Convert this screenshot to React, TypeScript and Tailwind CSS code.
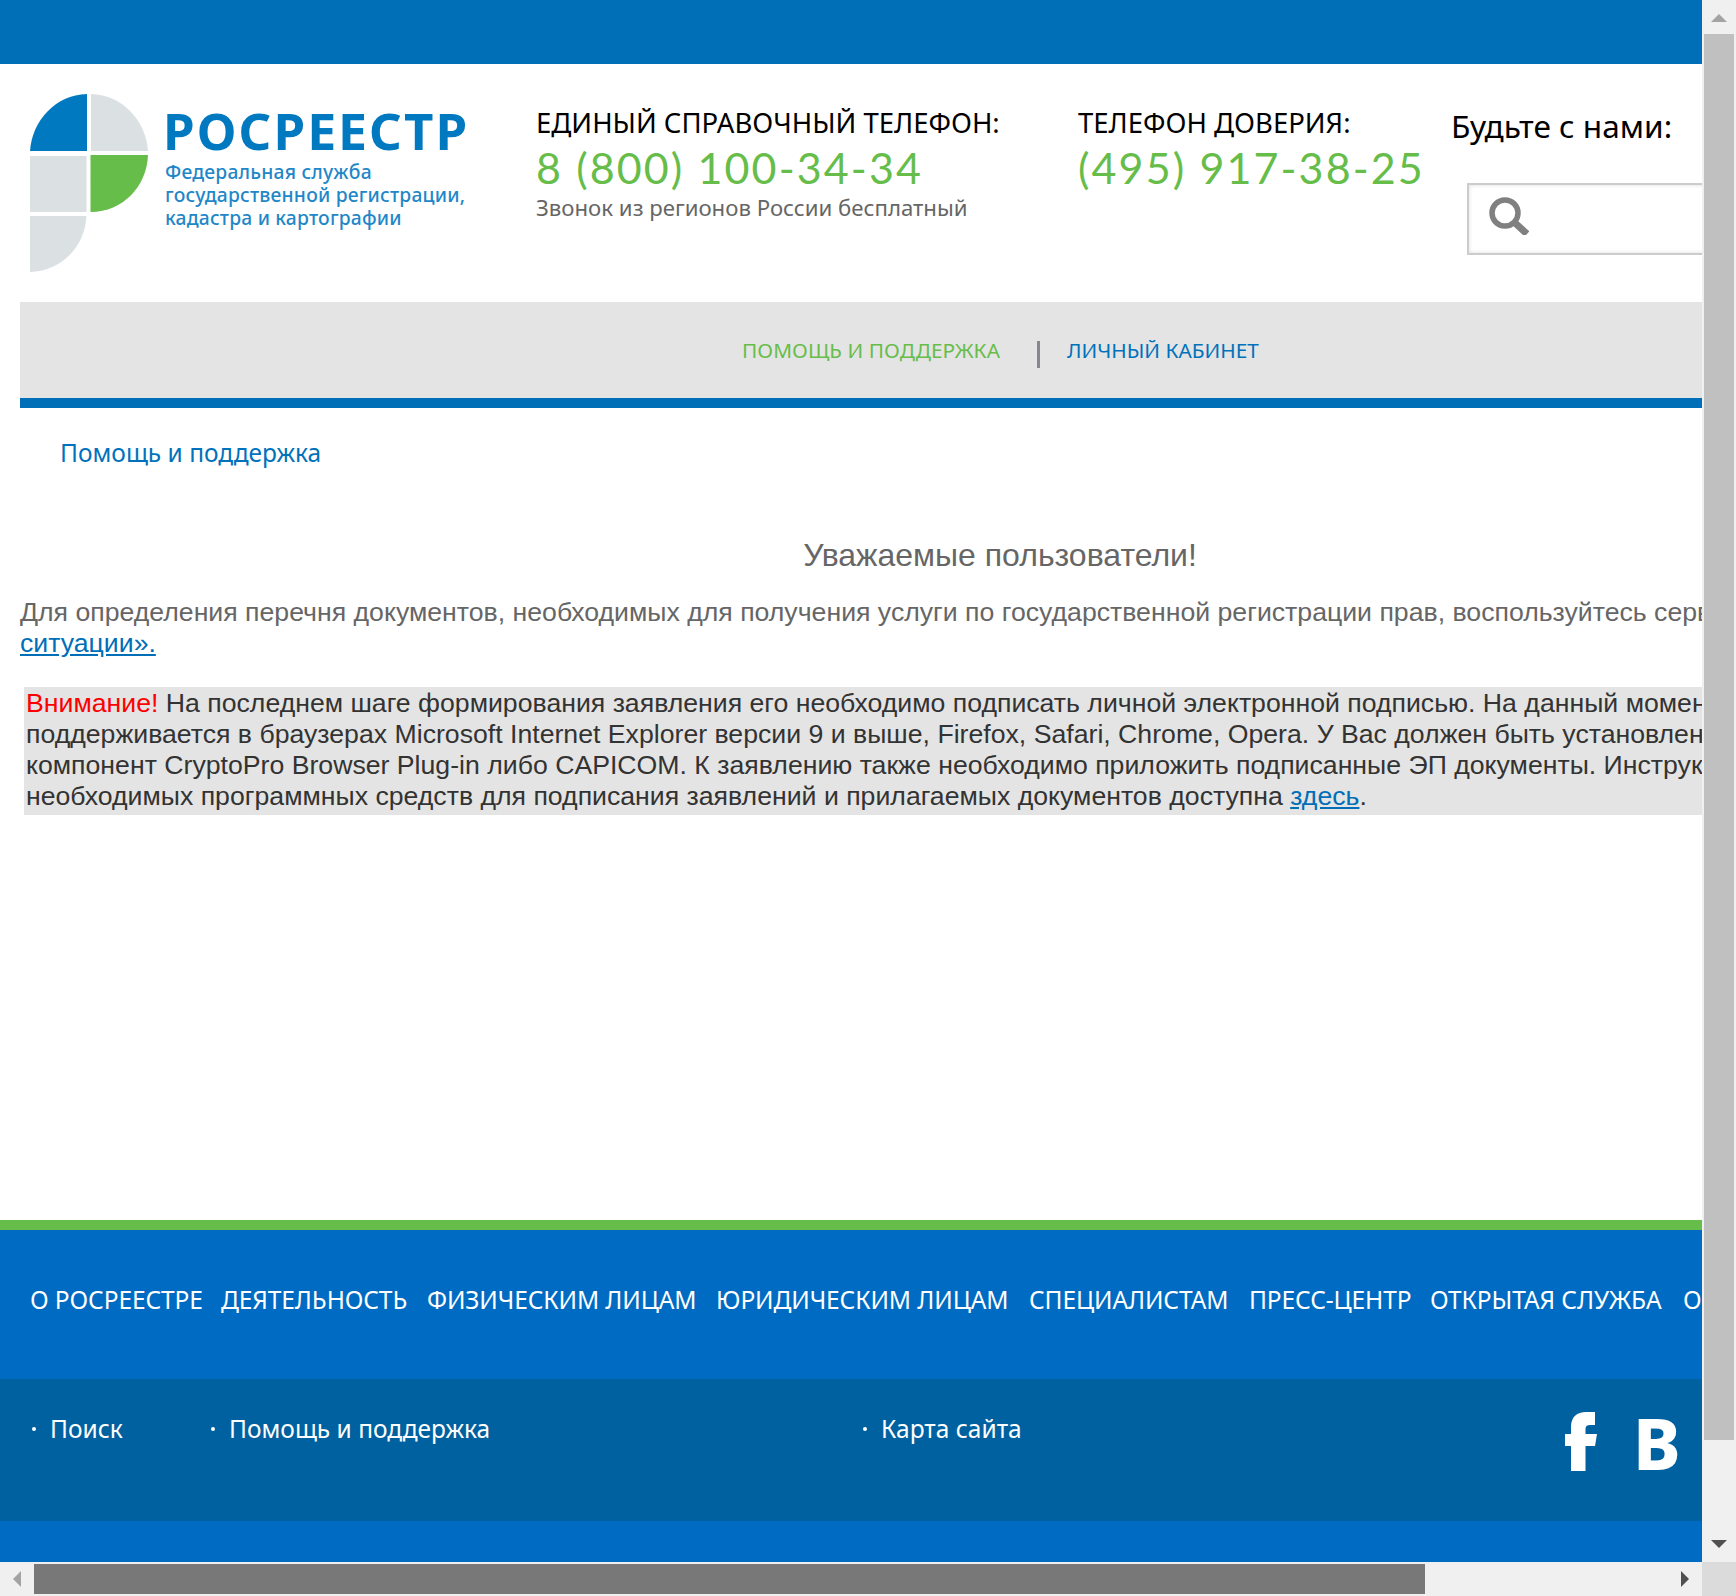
const footerSections = [
  { label: "О РОСРЕЕСТРЕ", box: "w-[191px]" },
  { label: "ДЕЯТЕЛЬНОСТЬ", box: "w-[206px]" },
  { label: "ФИЗИЧЕСКИМ ЛИЦАМ", box: "w-[289px]" },
  { label: "ЮРИДИЧЕСКИМ ЛИЦАМ", box: "w-[313px]" },
  { label: "СПЕЦИАЛИСТАМ", box: "w-[220px]" },
  { label: "ПРЕСС-ЦЕНТР", box: "w-[181px]" },
  { label: "ОТКРЫТАЯ СЛУЖБА", box: "w-[253px]" },
  { label: "О", box: "w-[200px]" },
];

const footerLinks = [
  { label: "Поиск", box: "w-[179px]" },
  { label: "Помощь и поддержка", box: "w-[652px]" },
  { label: "Карта сайта", box: "w-[702px]" },
];

function Logo() {
  return (
    <div className="flex h-[178px] w-[437px] shrink-0 overflow-hidden">
      <svg width="118" height="178" viewBox="0 0 118 178" className="shrink-0">
        <path d="M57 0V57H0C2 27 25 1 57 0Z" fill="#0079c1" />
        <path d="M61 0V57H118C116 27 93 1 61 0Z" fill="#dbe0e3" />
        <path d="M0 62H56.500V118H0Z" fill="#dbe0e3" />
        <path d="M60.500 61H118C117 92 93 118 60.500 118Z" fill="#67bd4a" />
        <path d="M0 122H56.500C55 152 32 177 0 178Z" fill="#dbe0e3" />
      </svg>
      <div className="ml-[15px] whitespace-nowrap">
        <div className="mt-[7px] h-[58px] text-[51px] leading-[58px] font-bold tracking-[2.100px] text-[#0079c1]">
          РОСРЕЕСТР
        </div>
        <div className="mt-[1px] pl-0.5 text-[19.300px] leading-[23px] font-medium tracking-[0.200px] text-[#1f87c8]">
          <p>Федеральная служба</p>
          <p>государственной регистрации,</p>
          <p>кадастра и картографии</p>
        </div>
      </div>
    </div>
  );
}

function Header() {
  return (
    <header className="flex h-[238px] pl-[30px] whitespace-nowrap">
      <div className="pt-[30px]">
        <Logo />
      </div>
      <div className="ml-[69px] w-[542px] shrink-0 pt-[39px]">
        <p className="text-[27.500px] leading-[40px] text-black">ЕДИНЫЙ СПРАВОЧНЫЙ ТЕЛЕФОН:</p>
        <p className="font-[Lato] text-[43px] leading-[50px] tracking-[2.100px] text-[#67bd4a]">8 (800) 100-34-34</p>
        <p className="-mt-px text-[22.200px] leading-[32px] text-[#666]">Звонок из регионов России бесплатный</p>
      </div>
      <div className="w-[373px] shrink-0 pt-[39px]">
        <p className="text-[27.500px] leading-[40px] text-black">ТЕЛЕФОН ДОВЕРИЯ:</p>
        <p className="font-[Lato] text-[43px] leading-[50px] tracking-[2.100px] text-[#67bd4a]">(495) 917-38-25</p>
      </div>
      <div className="shrink-0 pt-[42px]">
        <p className="text-[31.600px] leading-[40px] text-black">Будьте с нами:</p>
        <div className="mt-[37px] ml-4 h-[72px] w-[500px] border-2 border-[#ccc] pt-[12px] pl-5 shadow-[inset_0_0_4px_#ddd]">
          <svg width="40" height="38" viewBox="0 0 40 38" fill="none" stroke="#808080">
            <circle cx="16" cy="16" r="13" strokeWidth="5.500" />
            <path d="M25 25L38 37" strokeWidth="7" />
          </svg>
        </div>
      </div>
    </header>
  );
}

function Main() {
  return (
    <main className="h-[918px] w-[1980px] pl-5">
      <nav className="flex h-[106px] items-center border-b-[10px] border-[#006fb8] bg-[#e4e4e4] pl-[722px] text-[20.800px] whitespace-nowrap">
        <a className="mt-0.5 w-[295px] tracking-[0.050px] text-[#67bd4a]">ПОМОЩЬ И ПОДДЕРЖКА</a>
        <span className="mt-[9px] mr-[27px] h-[27px] w-[3px] bg-[#87878f]" />
        <a className="mt-0.5 text-[#0072bc]">ЛИЧНЫЙ КАБИНЕТ</a>
      </nav>
      <p className="mt-[25px] pl-[40px] text-[24.500px] leading-[40px] text-[#0072bc]">Помощь и поддержка</p>
      <div className="font-['Liberation_Sans'] text-[26.670px] leading-[31px] whitespace-nowrap">
        <h1 className="mt-[64px] text-center text-[32px] leading-[37px] text-[#666]">Уважаемые пользователи!</h1>
        <p className="mt-[23px] text-[#666]">
          Для определения перечня документов, необходимых для получения услуги по государственной регистрации прав,
          воспользуйтесь сервисом
          <br />
          <a className="text-[#006fb8] underline">ситуации».</a>
        </p>
        <div className="mt-[28px] ml-1 bg-[#e4e4e4] px-0.5 pt-px pb-[3px] text-[#333]">
          <p>
            <span className="text-[#f00]">Внимание!</span> На последнем шаге формирования заявления его необходимо
            подписать личной электронной подписью. На данный момент
          </p>
          <p>
            поддерживается в браузерах Microsoft Internet Explorer версии 9 и выше, Firefox, Safari, Chrome, Opera. У Вас
            должен быть установлен
          </p>
          <p>
            компонент CryptoPro Browser Plug-in либо CAPICOM. К заявлению также необходимо приложить подписанные ЭП
            документы. Инструкция
          </p>
          <p>
            необходимых программных средств для подписания заявлений и прилагаемых документов доступна{" "}
            <a className="text-[#006fb8] underline">здесь</a>.
          </p>
        </div>
      </div>
    </main>
  );
}

function Footer() {
  return (
    <footer className="h-[342px] w-[1980px] border-t-[10px] border-[#67bd4a] bg-[#006bc2] text-[24.500px] leading-[40px] whitespace-nowrap text-white">
      <nav className="flex h-[149px] pt-[50px] pl-[30px]">
        {footerSections.map(({ label, box }) => (
          <a key={label} className={`shrink-0 tracking-[-0.100px] ${box}`}>
            {label}
          </a>
        ))}
      </nav>
      <div className="flex h-[142px] bg-[#0061a0] pt-[30px] pl-8">
        {footerLinks.map(({ label, box }) => (
          <a key={label} className={`flex h-10 shrink-0 items-center ${box}`}>
            <span className="mr-3.5 size-1 rounded-full bg-white" />
            {label}
          </a>
        ))}
        <svg width="32" height="59" viewBox="0 0 32 59" fill="white" className="mt-[3px]">
          <path d="M6 59V34H0V22H6V15C6 5 12 0 21 0H30V13H25C22 13 20.500 14 20.500 17V22H32L30 34H20.500V59Z" />
        </svg>
        <span className="mt-1 ml-[36px] h-[60px] text-[71px] leading-[60px] font-extrabold">В</span>
      </div>
    </footer>
  );
}

export default function App() {
  return (
    <div className="grid h-[1596px] w-[1736px] grid-cols-[1702px_34px] grid-rows-[1562px_34px] overflow-hidden bg-white font-['Noto_Sans',sans-serif]">
      <div className="h-[1562px] w-[1702px] overflow-hidden">
        <div className="h-16 bg-[#006fb8]" />
        <Header />
        <Main />
        <Footer />
      </div>

      <div className="flex flex-col items-center bg-[#f0f0f0]">
        <svg width="34" height="34" fill="#a3a3a3">
          <path d="M9 22L17 14L25 22Z" />
        </svg>
        <div className="h-[1406px] w-[30px] bg-[#c0c0c0]" />
        <svg width="34" height="34" fill="#505050" className="mt-auto">
          <path d="M9 12H25L17 20Z" />
        </svg>
      </div>

      <div className="flex items-center bg-[#f0f0f0]">
        <svg width="34" height="34" fill="#a3a3a3">
          <path d="M21 9V25L13 17Z" />
        </svg>
        <div className="h-[30px] w-[1391px] bg-[#787878]" />
        <svg width="34" height="34" fill="#505050" className="ml-auto">
          <path d="M13 9L21 17L13 25Z" />
        </svg>
      </div>
      <div className="bg-[#dbdbdb]" />
    </div>
  );
}
